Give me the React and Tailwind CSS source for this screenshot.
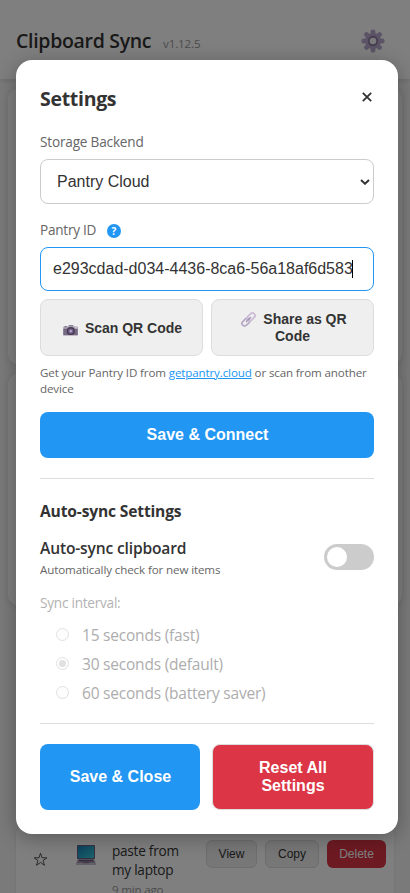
import React from 'react';

const ui = "font-['Open_Sans','Noto_Sans',sans-serif]";
const arial = "font-['Liberation_Sans',Arial,sans-serif]";

function Gear() {
  return (
    <svg className="block h-6 w-6" viewBox="0 0 24 24">
      <g fill="#b8a9cc">
        {[0, 45, 90, 135].map((a) => (
          <rect key={a} x="9.6" y="0.4" width="4.8" height="23.2" rx="2.2" transform={`rotate(${a} 12 12)`} />
        ))}
        <circle cx="12" cy="12" r="8" />
      </g>
      <circle cx="12" cy="12" r="5.2" fill="#8b7b9f" />
      <circle cx="12" cy="12" r="3.3" fill="#f4f2f6" />
    </svg>
  );
}

function Camera() {
  return (
    <svg className="block h-[11px] w-[15px]" viewBox="0 0 15 11">
      <path d="M1.5 1h2.5v1h-2.5zM5 1.6L6 .2h4l1 1.4z" fill="#655a70" />
      <rect x="0.3" y="1.6" width="14.4" height="9" rx="0.6" fill="#a69db0" />
      <path d="M.3 3.8h14.4v6.3H.3z" fill="#756982" />
      <circle cx="7.8" cy="6.1" r="4" fill="#45384f" />
      <circle cx="7.8" cy="6.1" r="2.6" fill="#76668c" />
      <circle cx="7.8" cy="6.1" r="1.2" fill="#b9a8d2" />
      <rect x="12" y="2.3" width="1.6" height="1" fill="#e5deec" />
    </svg>
  );
}

function Link() {
  return (
    <svg className="block h-[15px] w-[15px]" viewBox="0 0 15 15" fill="none">
      <g transform="rotate(-45 7.5 7.5)" strokeWidth="1.8">
        <rect x="-0.6" y="4.9" width="8.6" height="5.2" rx="2.6" stroke="#b9a9c6" />
        <rect x="7" y="4.9" width="8.6" height="5.2" rx="2.6" stroke="#cbbdd5" />
        <path d="M4.6 7.5h5.8" stroke="#a795b8" strokeWidth="1.5" strokeLinecap="round" />
      </g>
    </svg>
  );
}

function Laptop() {
  return (
    <svg className="block h-[21px] w-5" viewBox="0 0 20 21">
      <defs>
        <linearGradient id="screen" x1="0" y1="0" x2="1" y2="1">
          <stop offset="0" stopColor="#1683bd" />
          <stop offset="1" stopColor="#38c9d8" />
        </linearGradient>
      </defs>
      <rect x="1" y="0" width="18" height="14" rx="0.8" fill="#6c6080" />
      <rect x="2" y="1" width="16" height="12" fill="url(#screen)" />
      <path d="M2 14h16l1.6 4H.4z" fill="#a89db5" />
      <path d="M3 15h14l.6 1.6H2.4z" fill="#685b7c" />
      <path d="M0 18h20v2H0z" fill="#cabfd4" />
      <path d="M7 17h6v1.2H7z" fill="#81738f" />
    </svg>
  );
}

function BackgroundPage() {
  return (
    <div className="flex h-full flex-col bg-[#f5f5f5]">
      <header className="flex h-[79px] shrink-0 items-center justify-between bg-white pl-4 pr-[25px] pt-[3px] shadow-[0_2px_4px_rgba(0,0,0,0.1)]">
        <div className="flex items-baseline">
          <h1 className="w-[147px] whitespace-nowrap text-[19.5px] font-semibold leading-7 tracking-[-0.31px] text-[#333]">Clipboard Sync</h1>
          <span className="whitespace-nowrap text-[11.6px] tracking-[-0.12px] text-[#999]">v1.12.5</span>
        </div>
        <Gear />
      </header>
      <div className="mx-2 mt-[9px] h-[277px] shrink-0 rounded-xl bg-white shadow-[0_2px_8px_rgba(0,0,0,0.1)]" />
      <div className="mx-2 mt-2 h-[233px] shrink-0 rounded-xl bg-white shadow-[0_2px_8px_rgba(0,0,0,0.1)]" />
      <div className="mx-3 mt-auto flex h-[67px] shrink-0 items-start overflow-hidden px-1">
        <div className="flex h-20 w-full items-start rounded-t-lg bg-white pl-[17px] shadow-[0_1px_3px_rgba(0,0,0,0.1)]">
          <svg className="mt-[26px] h-[15px] w-[15px] shrink-0" viewBox="0 0 15 15" fill="none" stroke="#555" strokeWidth="1">
            <path d="M7.5 1.2l1.5 4.6h4.9L10 8.6l1.5 4.7-4-2.9-4 2.9L5 8.6 1.1 5.8H6z" />
          </svg>
          <div className="ml-7 mt-[19px]"><Laptop /></div>
          <div className="ml-4 mt-[15px] w-[94px] whitespace-nowrap text-[13.6px] leading-[19px] text-[#333]">
            <div className="tracking-[-0.25px]">paste from</div>
            <div className="tracking-[-0.25px]">my laptop</div>
            <div className="mt-[3px] text-[11.6px] leading-4 tracking-[-0.2px] text-[#999]">9 min ago</div>
          </div>
          <div className={`mt-[14px] flex gap-2 text-[12px] ${arial}`}>
            <button className="h-7 w-[51px] rounded-md border border-[#ddd] bg-[#efefef] text-[#333]">View</button>
            <button className="h-7 w-[54px] rounded-md border border-[#ddd] bg-[#efefef] text-[#333]">Copy</button>
            <button className="h-7 w-[59px] rounded-md bg-[#dc3545] text-white">Delete</button>
          </div>
        </div>
      </div>
    </div>
  );
}

function Interval({ label, checked }) {
  return (
    <div className="flex h-[29px] items-center pl-4">
      <span className="mb-0.5 flex h-[13px] w-[13px] shrink-0 items-center justify-center rounded-full border border-[#e1e1e1] bg-[#fdfdfd]">
        {checked && <span className="h-[7px] w-[7px] rounded-full bg-[#e1e1e1]" />}
      </span>
      <span className="ml-[13px] whitespace-nowrap pb-px text-[15.5px] leading-6 tracking-[-0.21px] text-[#adadad]">{label}</span>
    </div>
  );
}

export default function App() {
  return (
    <div className={`relative h-[893px] w-[410px] overflow-hidden ${ui}`}>
      <BackgroundPage />
      <div className="absolute inset-0 flex flex-col bg-black/50 pl-4 pr-3 pt-[60px]">
        <section className="h-[774px] w-[382px] rounded-2xl bg-white p-6 text-[#333] shadow-[0_4px_20px_rgba(0,0,0,0.3)]">
          <div className="flex h-[30px] items-center justify-between">
            <h2 className="text-[19.5px] font-bold leading-7 tracking-[-0.3px]">Settings</h2>
            <svg className="mb-1 mr-0.5 h-[10px] w-[10px]" viewBox="0 0 10 10" stroke="#333" strokeWidth="1.8">
              <path d="M.8.8l8.4 8.4M9.2.8L.8 9.2" />
            </svg>
          </div>

          <div className="mt-[18px] h-5 text-[13.6px] leading-5 tracking-[-0.19px] text-[#666]">Storage Backend</div>
          <div className={`mt-[7px] flex h-[45px] items-center justify-between rounded-lg border border-[#ccc] pl-4 pr-[3px] text-[16px] ${arial}`}>
            <span>Pantry Cloud</span>
            <svg className="h-[6px] w-[10px]" viewBox="0 0 10 6" fill="none" stroke="#333" strokeWidth="2">
              <path d="M1 .9l4 3.8L9 .9" />
            </svg>
          </div>

          <div className="mt-4 flex h-5 items-center text-[13.6px] leading-5 text-[#666]">
            <span className="w-[67px] whitespace-nowrap tracking-[-0.25px]">Pantry ID</span>
            <span className="mt-0.5 flex h-[14px] w-[14px] items-center justify-center rounded-full bg-[#2196f3] text-[10px] font-bold leading-none text-white">?</span>
          </div>
          <div className={`mt-[7px] flex h-11 items-center rounded-lg border border-[#2196f3] pl-3 text-[16px] ${arial}`}>
            <span className="w-[299px] whitespace-nowrap">e293cdad-d034-4436-8ca6-56a18af6d583</span>
            <span className="h-[18px] w-px bg-black" />
          </div>

          <div className={`mt-2 flex gap-2 text-[14px] font-bold leading-[17px] ${arial}`}>
            <button className="flex h-[57px] w-[163px] items-center justify-center rounded-lg border border-[#ddd] bg-[#efefef] pl-0.5 pt-px">
              <span className="mr-[7px] mt-1"><Camera /></span>Scan QR Code
            </button>
            <button className="flex h-[57px] w-[163px] flex-col items-center justify-center rounded-lg border border-[#ddd] bg-[#efefef] pt-px">
              <span className="flex items-center whitespace-nowrap pl-[3px]"><span className="mr-[7px]"><Link /></span>Share as QR</span>
              <span>Code</span>
            </button>
          </div>

          <p className="mt-[9px] whitespace-nowrap text-[11.6px] leading-4 tracking-[-0.135px] text-[#666]">
            Get your Pantry ID from <a className="text-[#2196f3] underline">getpantry.cloud</a> or scan from another<br />device
          </p>

          <button className={`mt-[15px] block h-[46px] w-full rounded-lg bg-[#2196f3] pl-px text-[16px] font-bold text-white ${arial}`}>Save &amp; Connect</button>

          <div className="mt-5 h-px bg-[#ddd]" />

          <h3 className="mt-5 h-6 whitespace-nowrap text-[15.6px] font-bold leading-6 tracking-[-0.16px]">Auto-sync Settings</h3>
          <div className="mt-[13px] flex h-[42px] items-center justify-between">
            <div className="whitespace-nowrap">
              <div className="text-[15.6px] font-semibold leading-6 tracking-[-0.16px]">Auto-sync clipboard</div>
              <div className="mt-0.5 text-[11.6px] leading-4 tracking-[-0.12px] text-[#666]">Automatically check for new items</div>
            </div>
            <span className="flex h-[26px] w-[50px] items-center rounded-full bg-[#ccc] pl-[3px]">
              <span className="h-5 w-5 rounded-full bg-white" />
            </span>
          </div>

          <div className="mt-[15px] h-5 text-[13.6px] leading-5 tracking-[-0.24px] text-[#b2b2b2]">Sync interval:</div>
          <div className="mt-2">
            <Interval label="15 seconds (fast)" />
            <Interval label="30 seconds (default)" checked />
            <Interval label="60 seconds (battery saver)" />
          </div>

          <div className="mt-[15px] h-px bg-[#ddd]" />

          <div className={`mt-5 flex gap-3 text-[16px] font-bold leading-[18px] text-white ${arial}`}>
            <button className="h-[66px] w-[160px] rounded-lg bg-[#2196f3] pl-px">Save &amp; Close</button>
            <button className="h-[66px] w-[162px] rounded-lg border border-[#ddd] bg-[#dc3545] px-8">Reset All Settings</button>
          </div>
        </section>
      </div>
    </div>
  );
}
